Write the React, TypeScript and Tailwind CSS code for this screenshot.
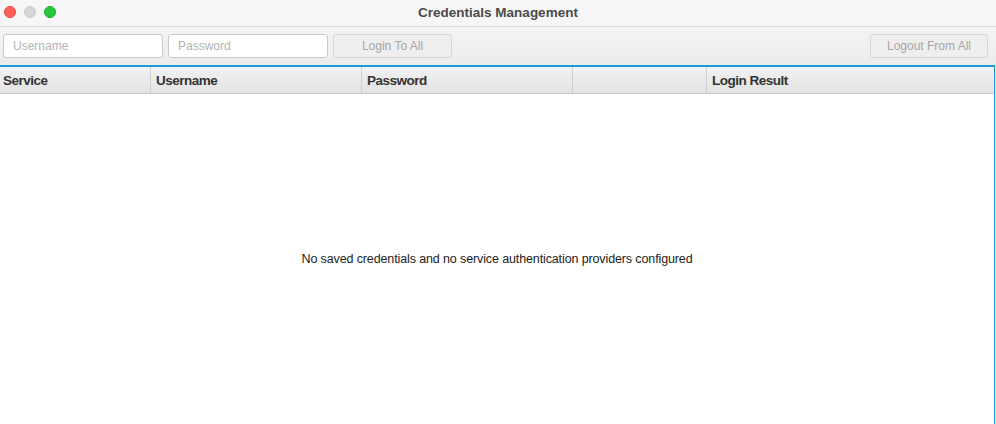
const columns = [
  { label: "Service", width: "w-[151px]", pad: "pl-[3px]" },
  { label: "Username", width: "w-[211px]", pad: "pl-[5px]" },
  { label: "Password", width: "w-[211px]", pad: "pl-[5px]" },
  { label: "", width: "w-[134px]", pad: "pl-[5px]" },
  { label: "Login Result", width: "flex-1", pad: "pl-[5px]" },
];

function TrafficLights() {
  return (
    <div className="absolute left-[4px] top-[6px] flex gap-[8px]">
      <span className="h-[12px] w-[12px] rounded-full border border-[#e2463f] bg-[#fe5f57]" />
      <span className="h-[12px] w-[12px] rounded-full border border-[#c8c8ca] bg-[#d6d6d8]" />
      <span className="h-[12px] w-[12px] rounded-full border border-[#1aab29] bg-[#28c840]" />
    </div>
  );
}

export default function App() {
  return (
    <div
      className="flex h-[424px] w-[996px] flex-col overflow-hidden bg-[#ececec]"
      style={{ fontFamily: '"Liberation Sans", Arial, sans-serif' }}
    >
      {/* Title bar */}
      <div className="relative flex h-[27px] items-center justify-center border-b border-[#d9d9d9] bg-[#f6f6f6]">
        <TrafficLights />
        <span className="text-[13.5px] font-bold text-[#4b4b4b]">Credentials Management</span>
      </div>

      {/* Toolbar */}
      <div className="flex h-[38px] items-center gap-[5px] bg-gradient-to-b from-[#f4f4f4] to-[#ececec] px-[3px]">
        <input
          placeholder="Username"
          className="h-[24px] w-[160px] rounded-[3px] border border-[#c9c9c9] bg-white px-[9px] text-[12px] text-[#333] placeholder:text-[#b3b3b3] outline-none"
        />
        <input
          placeholder="Password"
          className="h-[24px] w-[160px] rounded-[3px] border border-[#c9c9c9] bg-white px-[9px] text-[12px] text-[#333] placeholder:text-[#b3b3b3] outline-none"
        />
        <button className="h-[24px] w-[119px] rounded-[3px] border border-[#d6d6d6] bg-[#efefef] text-[12px] text-[#a5a5a5]">
          Login To All
        </button>
        <div className="flex-1" />
        <button className="mr-[5px] h-[24px] w-[118px] rounded-[3px] border border-[#d6d6d6] bg-[#efefef] text-[12px] text-[#a5a5a5]">
          Logout From All
        </button>
      </div>

      {/* Table */}
      <div className="mr-[1px] flex flex-1 flex-col border-r-[1px] border-t-[2px] border-[#1b9ad6] bg-white">
        <div className="flex h-[27px] border-b border-[#c8c8c8] bg-gradient-to-b from-[#f2f2f2] to-[#e3e3e3]">
          {columns.map((c, i) => (
            <div
              key={i}
              className={`${c.width} ${c.pad} flex items-center border-r border-[#cfcfcf] pt-[3px] text-[13.5px] font-bold tracking-[-0.5px] text-[#333] last:border-r-0`}
            >
              {c.label}
            </div>
          ))}
        </div>
        <div className="flex flex-1 items-center justify-center pt-[0px]">
          <span className="text-[12.5px] tracking-[-0.12px] text-[#222]">
            No saved credentials and no service authentication providers configured
          </span>
        </div>
      </div>
    </div>
  );
}
